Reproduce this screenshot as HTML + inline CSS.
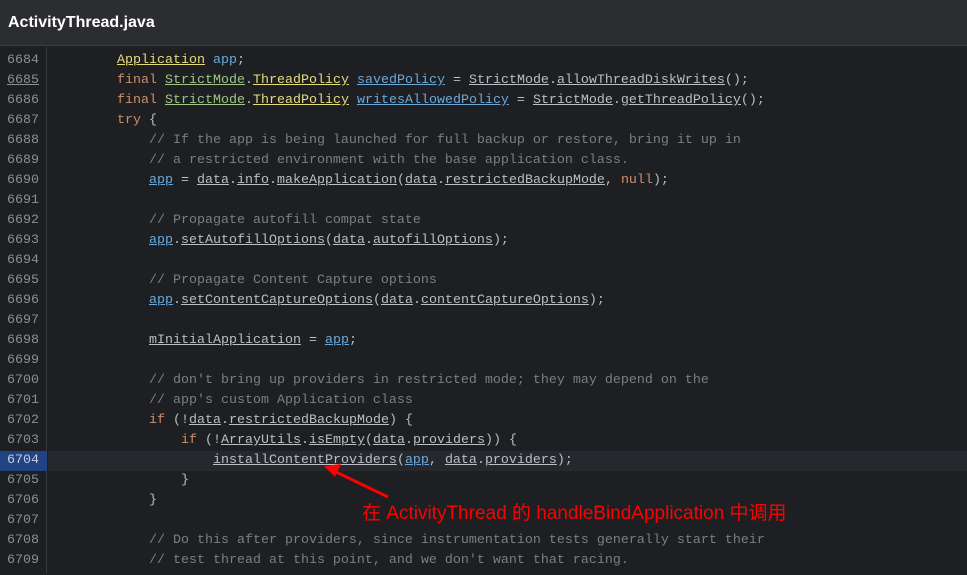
<!DOCTYPE html>
<html><head><meta charset="utf-8"><style>
*{margin:0;padding:0;box-sizing:border-box}
body{width:967px;height:573px;overflow:hidden;background:#1e1f22;position:relative;font-family:"Liberation Mono",monospace}
#hdr{position:absolute;left:0;top:0;width:967px;height:46px;background:#2b2d30;border-bottom:1px solid #393b40}
#hdr span{position:absolute;left:8px;top:14px;font:bold 16px "Liberation Sans",sans-serif;color:#fff}
#gut{position:absolute;left:0;top:47px;width:47px;height:526px;border-right:1px solid #393b40}
#w{position:absolute;left:0;top:2px;width:967px;height:573px}
.ln{position:absolute;left:0;width:47px;height:20px;line-height:20px;padding-left:7px;font-size:13.33px;color:#8c8e93}
.cl{position:absolute;left:53px;height:20px;line-height:20px;font-size:13.33px;color:#bcbec4;white-space:pre}
.hl{position:absolute;left:48px;width:919px;height:20px;background:#26282e}
.k{color:#cf8e6d}.g{color:#9fc587;text-decoration:underline}.y{color:#e5dc7a;text-decoration:underline}.b{color:#6aa9d9;text-decoration:underline}.c{color:#7a7e85}.u{text-decoration:underline}.bn{color:#6aa9d9}
</style></head><body>
<div id="hdr"><span>ActivityThread.java</span></div>
<div id="gut"></div>
<div id="w">
<div class="hl" style="top:449px"></div>
<div style="position:absolute;left:0;top:449px;width:47px;height:20px;background:#214283"></div>
<div class="ln" style="top:49px">6684</div><div class="ln" style="top:69px;text-decoration:underline">6685</div><div class="ln" style="top:89px">6686</div><div class="ln" style="top:109px">6687</div><div class="ln" style="top:129px">6688</div><div class="ln" style="top:149px">6689</div><div class="ln" style="top:169px">6690</div><div class="ln" style="top:189px">6691</div><div class="ln" style="top:209px">6692</div><div class="ln" style="top:229px">6693</div><div class="ln" style="top:249px">6694</div><div class="ln" style="top:269px">6695</div><div class="ln" style="top:289px">6696</div><div class="ln" style="top:309px">6697</div><div class="ln" style="top:329px">6698</div><div class="ln" style="top:349px">6699</div><div class="ln" style="top:369px">6700</div><div class="ln" style="top:389px">6701</div><div class="ln" style="top:409px">6702</div><div class="ln" style="top:429px">6703</div><div class="ln" style="top:449px;color:#c8d0e0">6704</div><div class="ln" style="top:469px">6705</div><div class="ln" style="top:489px">6706</div><div class="ln" style="top:509px">6707</div><div class="ln" style="top:529px">6708</div><div class="ln" style="top:549px">6709</div>
<div class="cl" style="top:49px">        <span class="y">Application</span> <span class="bn">app</span>;</div>
<div class="cl" style="top:69px">        <span class="k">final</span> <span class="g">StrictMode</span>.<span class="y">ThreadPolicy</span> <span class="b">savedPolicy</span> = <span class="u">StrictMode</span>.<span class="u">allowThreadDiskWrites</span>();</div>
<div class="cl" style="top:89px">        <span class="k">final</span> <span class="g">StrictMode</span>.<span class="y">ThreadPolicy</span> <span class="b">writesAllowedPolicy</span> = <span class="u">StrictMode</span>.<span class="u">getThreadPolicy</span>();</div>
<div class="cl" style="top:109px">        <span class="k">try</span> {</div>
<div class="cl c" style="top:129px">            // If the app is being launched for full backup or restore, bring it up in</div>
<div class="cl c" style="top:149px">            // a restricted environment with the base application class.</div>
<div class="cl" style="top:169px">            <span class="b">app</span> = <span class="u">data</span>.<span class="u">info</span>.<span class="u">makeApplication</span>(<span class="u">data</span>.<span class="u">restrictedBackupMode</span>, <span class="k">null</span>);</div>
<div class="cl c" style="top:209px">            // Propagate autofill compat state</div>
<div class="cl" style="top:229px">            <span class="b">app</span>.<span class="u">setAutofillOptions</span>(<span class="u">data</span>.<span class="u">autofillOptions</span>);</div>
<div class="cl c" style="top:269px">            // Propagate Content Capture options</div>
<div class="cl" style="top:289px">            <span class="b">app</span>.<span class="u">setContentCaptureOptions</span>(<span class="u">data</span>.<span class="u">contentCaptureOptions</span>);</div>
<div class="cl" style="top:329px">            <span class="u">mInitialApplication</span> = <span class="b">app</span>;</div>
<div class="cl c" style="top:369px">            // don't bring up providers in restricted mode; they may depend on the</div>
<div class="cl c" style="top:389px">            // app's custom Application class</div>
<div class="cl" style="top:409px">            <span class="k">if</span> (!<span class="u">data</span>.<span class="u">restrictedBackupMode</span>) {</div>
<div class="cl" style="top:429px">                <span class="k">if</span> (!<span class="u">ArrayUtils</span>.<span class="u">isEmpty</span>(<span class="u">data</span>.<span class="u">providers</span>)) {</div>
<div class="cl" style="top:449px">                    <span class="u">installContentProviders</span>(<span class="b">app</span>, <span class="u">data</span>.<span class="u">providers</span>);</div>
<div class="cl" style="top:469px">                }</div>
<div class="cl" style="top:489px">            }</div>
<div class="cl c" style="top:529px">            // Do this after providers, since instrumentation tests generally start their</div>
<div class="cl c" style="top:549px">            // test thread at this point, and we don't want that racing.</div>
</div>
<svg style="position:absolute;left:0;top:0" width="967" height="573"><line x1="388" y1="497" x2="334" y2="471" stroke="#f00" stroke-width="3"/><polygon points="324,466 341,464 335,477" fill="#f00"/></svg>
<div style="position:absolute;left:362px;top:498px;font:19px 'Liberation Sans','Noto Sans CJK SC',sans-serif;color:#f00;white-space:nowrap">在 ActivityThread 的 handleBindApplication 中调用</div>
</body></html>
